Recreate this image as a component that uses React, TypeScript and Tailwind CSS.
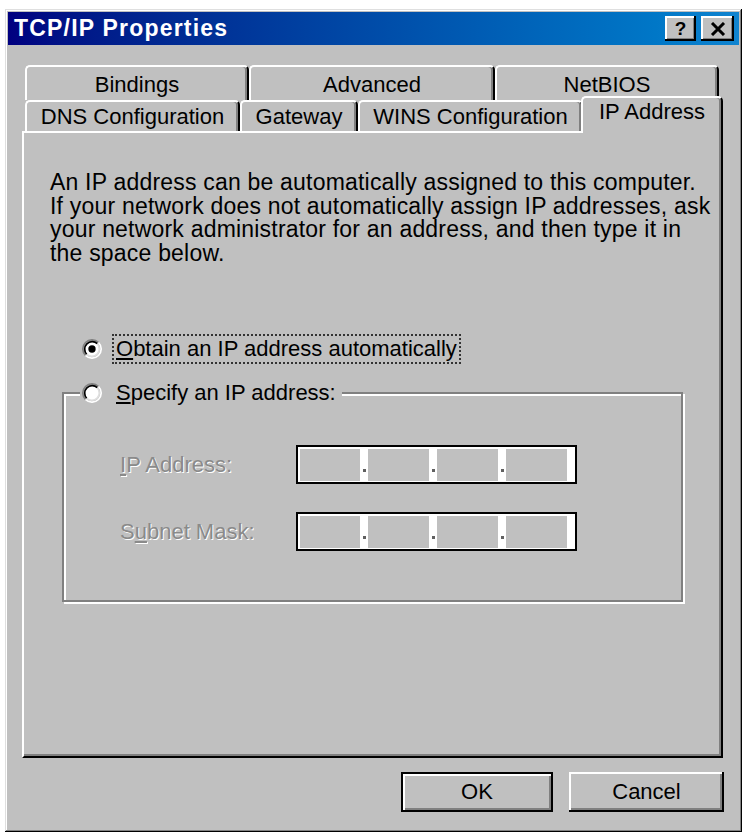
const font = "font-['Liberation_Sans',Arial,sans-serif]"

function Radio({ checked }: { checked?: boolean }) {
  return (
    <svg width="20" height="20" viewBox="0 0 12 12" className="shrink-0">
      <circle cx="6" cy="6" r="4.4" fill="#fff" />
      <path d="M2.11 9.89A5.5 5.5 0 0 1 9.89 2.11" fill="none" stroke="#808080" strokeWidth="1" />
      <path d="M2.82 9.18A4.5 4.5 0 0 1 9.18 2.82" fill="none" stroke="#000" strokeWidth="1" />
      <path d="M9.89 2.11A5.5 5.5 0 0 1 2.11 9.89" fill="none" stroke="#fff" strokeWidth="1" />
      <path d="M9.18 2.82A4.5 4.5 0 0 1 2.82 9.18" fill="none" stroke="#dfdfdf" strokeWidth="1" />
      {checked && <circle cx="6" cy="6" r="2.2" fill="#000" />}
    </svg>
  )
}

function IpField() {
  const segs = ['w-[60px]', 'w-[61px]', 'w-[61px]', 'w-[61px]']
  return (
    <div className="flex w-[281px] h-[39px] border-2 border-black bg-white pt-[2px] pl-[2px] pb-[1px]">
      {segs.map((w, i) => (
        <div key={i} className="flex">
          <div className={`${w} bg-[#c0c0c0]`} />
          <div className="w-[8px] flex items-end justify-center pb-[9px]">
            {i < 3 && <div className="w-[3px] h-[3px] bg-[#606060]" />}
          </div>
        </div>
      ))}
    </div>
  )
}

const tabBase =
  'border-t-2 border-l-2 border-r-2 border-t-white border-l-white border-r-black rounded-t-[5px] shadow-[inset_-2px_0_#808080] text-center text-[22px] leading-[24px] whitespace-nowrap'

export default function App() {
  return (
    <div className={`w-[745px] h-[832px] bg-white pt-[9px] pl-[5px] text-black ${font}`}>
      <div className="w-[737px] h-[823px] bg-[#c0c0c0] p-[3px] shadow-[inset_-1px_-1px_#000,inset_1px_1px_#dfdfdf,inset_-2px_-2px_#808080,inset_2px_2px_#fff]">
        {/* title bar */}
        <div className="h-[33px] flex items-center justify-between pl-[6px] pr-[5px] bg-linear-to-r from-[#000080] to-[#1084d0]">
          <span className="text-white font-bold text-[23px] tracking-[1.2px] leading-none">TCP/IP Properties</span>
          <div className="flex gap-[5px]">
            <div className="w-[31px] h-[25px] bg-[#c0c0c0] flex items-center justify-center shadow-[inset_-2px_-2px_#000,inset_2px_2px_#fff,inset_-3px_-3px_#808080] font-bold text-[19px] leading-none">
              ?
            </div>
            <div className="w-[33px] h-[25px] bg-[#c0c0c0] flex items-center justify-center shadow-[inset_-2px_-2px_#000,inset_2px_2px_#fff,inset_-3px_-3px_#808080]">
              <svg width="16" height="14" viewBox="0 0 16 14">
                <path d="M2 1L14 13M14 1L2 13" stroke="#000" strokeWidth="3" />
              </svg>
            </div>
          </div>
        </div>

        <div className="pl-[14px] pt-[20px]">
          {/* back row of tabs */}
          <div className="flex ml-[3px] h-[35px]">
            <div className={`${tabBase} w-[224px] h-[35px] pt-[6px]`}>Bindings</div>
            <div className={`${tabBase} w-[246px] h-[35px] pt-[6px]`}>Advanced</div>
            <div className={`${tabBase} w-[224px] h-[35px] pt-[6px]`}>NetBIOS</div>
          </div>
          {/* front row of tabs */}
          <div className="flex items-start ml-[3px] h-[31px]">
            <div className={`${tabBase} w-[215px] h-[31px] pt-[3px]`}>DNS Configuration</div>
            <div className={`${tabBase} w-[118px] h-[31px] pt-[3px]`}>Gateway</div>
            <div className={`${tabBase} w-[225px] h-[31px] pt-[3px]`}>WINS Configuration</div>
            <div className={`${tabBase} relative z-10 bg-[#c0c0c0] w-[142px] h-[37px] -ml-[2px] -mt-[4px] pt-[2px]`}>
              IP Address
            </div>
          </div>

          {/* tab page */}
          <div className="w-[701px] h-[627px] border-2 border-t-white border-l-white border-r-black border-b-black shadow-[inset_-2px_-2px_#808080] pl-[26px] pt-[38px]">
            <p className="text-[23px] leading-[23.5px] tracking-[0.2px] whitespace-nowrap">
              An IP address can be automatically assigned to this computer.
              <br />
              If your network does not automatically assign IP addresses, ask
              <br />
              your network administrator for an address, and then type it in
              <br />
              the space below.
            </p>

            <div className="mt-[69px] ml-[32px] h-[30px] flex items-center gap-[10px]">
              <Radio checked />
              <span className="h-[30px] border-2 border-dotted border-[#333] px-[2px] text-[22px] leading-[26px] whitespace-nowrap">
                <span className="underline">O</span>btain an IP address automatically
              </span>
            </div>

            <fieldset className="mt-[14px] ml-[12px] w-[621px] border-2 border-[#808080] shadow-[inset_2px_2px_0_#fff,2px_2px_0_#fff] pb-[49px]">
              <legend className="ml-[16px] px-[2px] bg-[#c0c0c0]">
                <span className="flex items-center gap-[14px] h-[30px] pr-[4px] text-[22px] leading-[26px] whitespace-nowrap">
                  <Radio />
                  <span>
                    <span className="underline">S</span>pecify an IP address:
                  </span>
                </span>
              </legend>

              <div className="mt-[37px] flex items-center">
                <div className="w-[232px] pl-[56px] text-[22px] leading-[26px] text-[#8a8a8a] [text-shadow:1px_1px_0_#fff] whitespace-nowrap">
                  <span className="underline">I</span>P Address:
                </div>
                <IpField />
              </div>
              <div className="mt-[28px] flex items-center">
                <div className="w-[232px] pl-[56px] text-[22px] leading-[26px] text-[#8a8a8a] [text-shadow:1px_1px_0_#fff] whitespace-nowrap">
                  S<span className="underline">u</span>bnet Mask:
                </div>
                <IpField />
              </div>
            </fieldset>
          </div>

          {/* dialog buttons */}
          <div className="mt-[14px] pr-[15px] flex justify-end gap-[16px]">
            <button className="w-[152px] h-[40px] border-2 border-black bg-[#c0c0c0] shadow-[inset_2px_2px_#fff,inset_-2px_-2px_#808080] text-[22px] leading-none">
              OK
            </button>
            <button className="w-[155px] h-[40px] bg-[#c0c0c0] shadow-[inset_-2px_-2px_#000,inset_2px_2px_#fff,inset_-4px_-4px_#808080] text-[22px] leading-none">
              Cancel
            </button>
          </div>
        </div>
      </div>
    </div>
  )
}
